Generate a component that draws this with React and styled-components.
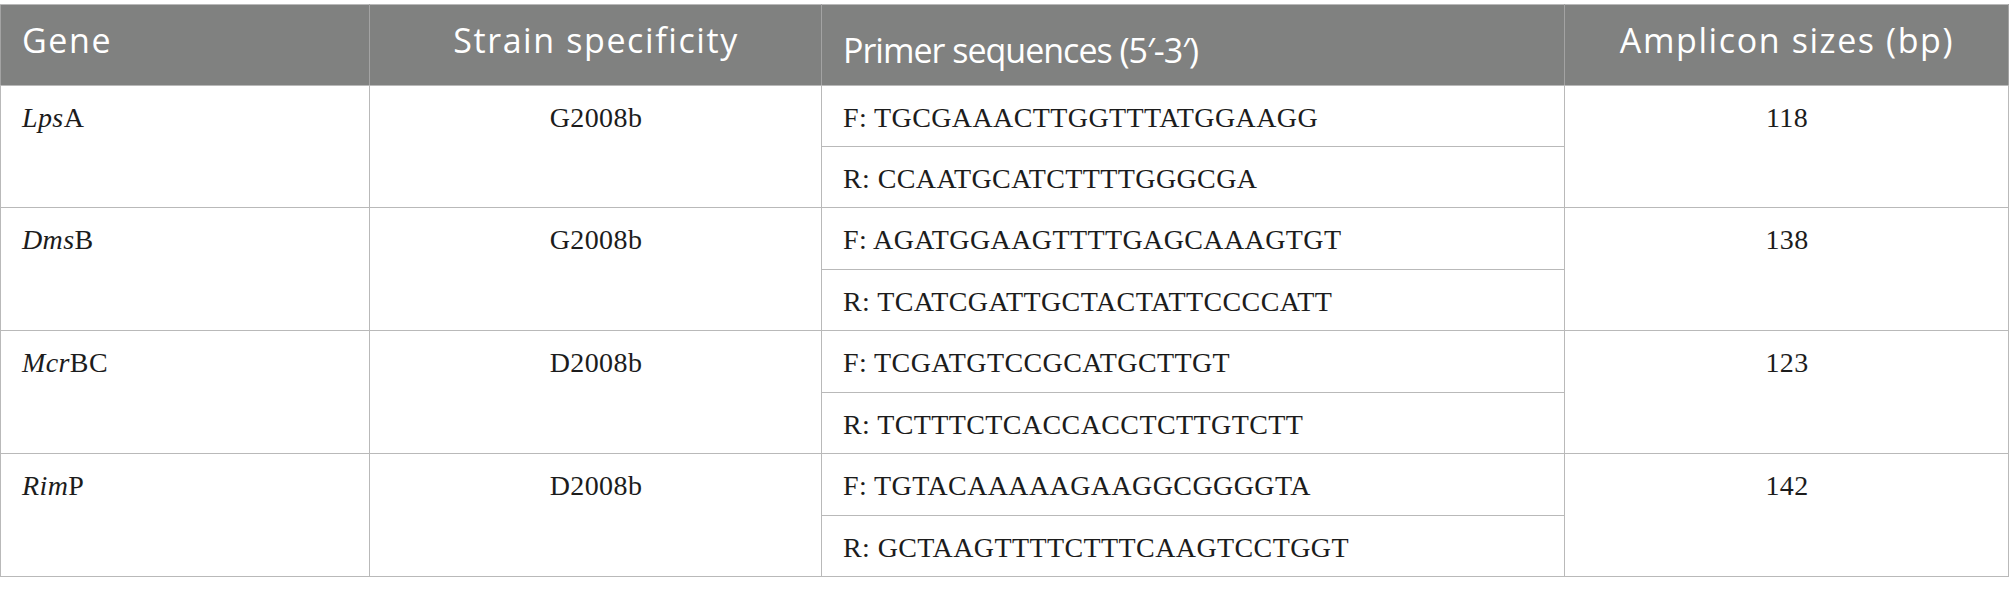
import React from 'react';
import styled, { createGlobalStyle } from 'styled-components';

const GlobalStyle = createGlobalStyle`
  html, body {
    margin: 0;
    padding: 0;
    background: #ffffff;
  }
`;

const rows = [
  { gene: ['Lps', 'A'], strain: 'G2008b', forward: 'TGCGAAACTTGGTTTATGGAAGG', reverse: 'CCAATGCATCTTTTGGGCGA', size: 118 },
  { gene: ['Dms', 'B'], strain: 'G2008b', forward: 'AGATGGAAGTTTTGAGCAAAGTGT', reverse: 'TCATCGATTGCTACTATTCCCCATT', size: 138 },
  { gene: ['Mcr', 'BC'], strain: 'D2008b', forward: 'TCGATGTCCGCATGCTTGT', reverse: 'TCTTTCTCACCACCTCTTGTCTT', size: 123 },
  { gene: ['Rim', 'P'], strain: 'D2008b', forward: 'TGTACAAAAAGAAGGCGGGGTA', reverse: 'GCTAAGTTTTCTTTCAAGTCCTGGT', size: 142 },
];

const App = () => {
  return (
    <>
      <GlobalStyle />
      <Page>
        <Table>
          <colgroup>
            <Col width={369} />
            <Col width={452} />
            <Col width={743} />
            <Col width={444} />
          </colgroup>
          <thead>
            <HeadRow>
              <HeadCell>Gene</HeadCell>
              <HeadCell align="center">Strain specificity</HeadCell>
              <HeadCell $low>Primer sequences (5′-3′)</HeadCell>
              <HeadCell align="center">Amplicon sizes (bp)</HeadCell>
            </HeadRow>
          </thead>
          <tbody>
            {rows.map((row, i) => (
              <React.Fragment key={row.strain + i}>
                <BodyRow $height={i === 0 ? 61 : 62}>
                  <Cell rowSpan={2}>
                    <i>{row.gene[0]}</i>{row.gene[1]}
                  </Cell>
                  <Cell rowSpan={2} align="center">{row.strain}</Cell>
                  <Cell>F: {row.forward}</Cell>
                  <Cell rowSpan={2} align="center">{row.size}</Cell>
                </BodyRow>
                <BodyRow $height={61}>
                  <Cell>R: {row.reverse}</Cell>
                </BodyRow>
              </React.Fragment>
            ))}
          </tbody>
        </Table>
      </Page>
    </>
  );
};

export default App;

const Page = styled.div`
  padding-top: 4px;
  width: 2009px;
`;

const Table = styled.table`
  width: 2008px;
  table-layout: fixed;
  border-collapse: collapse;
  border: 1px solid #b9b9b9;
`;

const Col = styled.col`
  width: ${props => props.width}px;
`;

const HeadRow = styled.tr`
  height: 81px;
`;

const HeadCell = styled.th`
  background-color: #808180;
  color: #ffffff;
  font-family: "Open Sans", "Noto Sans", sans-serif;
  font-size: 34px;
  font-weight: 400;
  letter-spacing: ${props => (props.$low ? '-1px' : '1.6px')};
  line-height: 40px;
  text-align: ${props => props.align || 'left'};
  vertical-align: top;
  padding: ${props => (props.$low ? '25px' : '15px')} 20px 0 21px;
  border-left: 1px solid #a3a3a3;
  border-right: 1px solid #a3a3a3;
  border-top: 1px solid #b9b9b9;
  border-bottom: 1px solid #b9b9b9;
  white-space: nowrap;
`;

const BodyRow = styled.tr`
  height: ${props => props.$height}px;
`;

const Cell = styled.td`
  font-family: "Liberation Serif", "Times New Roman", serif;
  font-size: 28px;
  letter-spacing: 0.4px;
  line-height: 32px;
  color: #1c1c1c;
  text-align: ${props => props.align || 'left'};
  vertical-align: top;
  padding: 16px 20px 0 21px;
  border: 1px solid #b9b9b9;
  white-space: nowrap;

  i {
    font-style: italic;
  }
`;
